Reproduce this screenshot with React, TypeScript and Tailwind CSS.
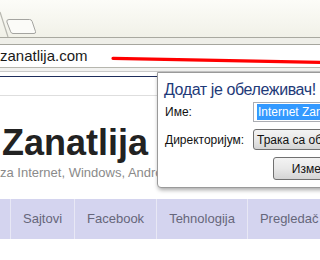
export default function App() {
  const navItems = ["Sajtovi", "Facebook", "Tehnologija", "Pregledač"];

  return (
    <div className="relative w-[320px] h-[260px] overflow-hidden bg-white font-['Liberation_Sans',Arial,sans-serif]">
      {/* browser chrome */}
      <div className="h-[37px] bg-gradient-to-b from-[#fcfcf8] to-[#f1f1e8]">
        <svg width="60" height="37" viewBox="0 0 60 37" fill="none">
          <path d="M0 12 L8 37" stroke="#b8b8b0" strokeWidth="1.2" />
          <path
            d="M9 19.5 L29.5 19.5 Q31.5 19.5 32.1 21.3 L35.5 31.5 Q36 33.5 34 33.5 L13 33.5 Q11.3 33.5 10.7 31.8 L6.9 22 Q6.3 19.5 9 19.5 Z"
            fill="#fbfbf8"
            stroke="#a4a4a0"
          />
        </svg>
      </div>
      <div className="h-px bg-[#a9a9a0]" />
      <div className="h-[6px] bg-[#efefe9]" />
      <div className="h-px bg-[#a6a69e]" />
      <div className="h-[22px] bg-white text-[15px] leading-[22px] text-[#1a1a1a] whitespace-nowrap">
        zanatlija.com
      </div>
      <div className="h-px bg-[#b6b6ae]" />
      <div className="h-[3px] bg-[#f2f2f0]" />
      <div className="h-px bg-[#cacaca]" />
      <div className="h-[4px] bg-white" />
      <div className="h-px bg-[#1f2d5c]" />
      <div className="h-[18px] bg-white" />
      <div className="h-px bg-[#dedede]" />

      {/* page header */}
      <div className="pt-[29px]">
        <h1 className="pl-[2px] text-[36px] leading-[36px] font-bold text-[#222222] whitespace-nowrap">
          Zanatlija
        </h1>
        <p className="mt-[5px] text-[13px] leading-[13px] text-[#8a8a8a] whitespace-nowrap">
          za Internet, Windows, Android i Linux
        </p>
      </div>

      {/* nav */}
      <div className="mt-[20px] flex h-[40px] bg-[#d4d4ef] text-[13px] text-[#66667a] whitespace-nowrap">
        <div className="w-[10px] shrink-0" />
        {navItems.map((item) => (
          <div key={item} className="flex items-center border-l border-[#e8e8f5] px-3 shrink-0">
            {item}
          </div>
        ))}
      </div>

      {/* bookmark bubble */}
      <div className="absolute left-[157px] top-[72px] w-[170px] h-[116px] bg-white border border-[#9a9a9a] rounded-bl-[4px] shadow-[1px_2px_4px_rgba(0,0,0,0.35)]">
        <div className="pt-[7px] pl-[6px] text-[16px] leading-[20px] tracking-[-0.4px] text-[#1e3a78] whitespace-nowrap">
          Додат је обележивач!
        </div>
        <div className="mt-[2px] grid grid-cols-[95px_1fr] gap-y-[7px] text-[12px] text-[#111] whitespace-nowrap">
          <div className="pl-[7px] flex items-center h-[20px]">Име:</div>
          <div className="h-[20px] border border-[#abadb3] bg-white pl-[3px] pt-px">
            <span className="block h-[16px] leading-[16px] bg-[#3399ff] text-white pl-px">
              Internet Zanatlija
            </span>
          </div>
          <div className="pl-[7px] flex items-center h-[21px]">Директоријум:</div>
          <div className="h-[21px] flex items-center pl-[3px] rounded-[3px] border border-[#707070] bg-gradient-to-b from-[#f3f3f3] via-[#e8e8e8] to-[#d4d4d4]">
            Трака са обележивачима
          </div>
          <div />
          <div className="ml-[20px] w-[90px] h-[23px] flex items-center justify-center rounded-[3px] border border-[#707070] bg-gradient-to-b from-[#f3f3f3] via-[#e8e8e8] to-[#d4d4d4]">
            Измени...
          </div>
        </div>
      </div>

      {/* red annotation stroke */}
      <svg
        className="absolute left-0 top-0 pointer-events-none"
        width="320"
        height="260"
        viewBox="0 0 320 260"
      >
        <path d="M113 58.3 L320 62.3" stroke="#ff0000" strokeWidth="3.2" strokeLinecap="round" />
      </svg>
    </div>
  );
}
